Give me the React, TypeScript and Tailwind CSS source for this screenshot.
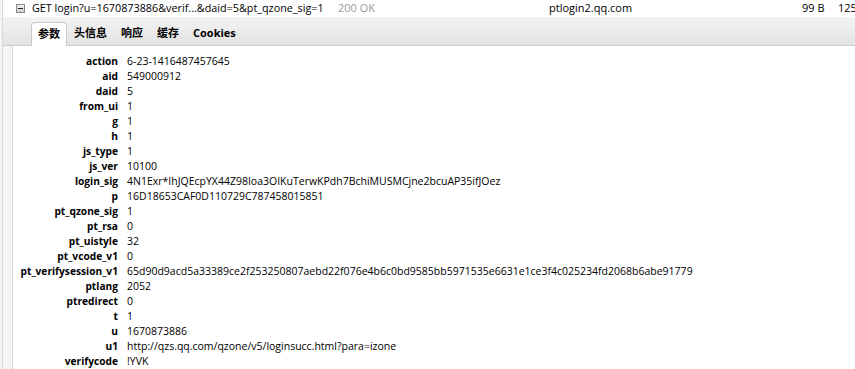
import React from 'react';

const params: [string, string][] = [
  ['action', '6-23-1416487457645'],
  ['aid', '549000912'],
  ['daid', '5'],
  ['from_ui', '1'],
  ['g', '1'],
  ['h', '1'],
  ['js_type', '1'],
  ['js_ver', '10100'],
  ['login_sig', '4N1Exr*IhJQEcpYX44Z98Ioa3OIKuTerwKPdh7BchiMUSMCjne2bcuAP35ifJOez'],
  ['p', '16D18653CAF0D110729C787458015851'],
  ['pt_qzone_sig', '1'],
  ['pt_rsa', '0'],
  ['pt_uistyle', '32'],
  ['pt_vcode_v1', '0'],
  ['pt_verifysession_v1', '65d90d9acd5a33389ce2f253250807aebd22f076e4b6c0bd9585bb5971535e6631e1ce3f4c025234fd2068b6abe91779'],
  ['ptlang', '2052'],
  ['ptredirect', '0'],
  ['t', '1'],
  ['u', '1670873886'],
  ['u1', 'http://qzs.qq.com/qzone/v5/loginsucc.html?para=izone'],
  ['verifycode', '!YVK'],
];

const tabs = ['参数', '头信息', '响应', '缓存', 'Cookies'];

const App: React.FC = () => {
  return (
    <div
      className="w-[855px] h-[369px] bg-white overflow-hidden flex text-black"
      style={{ fontFamily: '"Open Sans", "Noto Sans CJK SC", sans-serif' }}
    >
      {/* left gutter line */}
      <div className="w-[3px] shrink-0 border-r border-[#d9d9d9] bg-[#f4f4f4]" />

      <div className="flex-1 flex flex-col min-w-0">
        {/* request row */}
        <div className="h-[17px] flex items-center text-[11px] whitespace-nowrap">
          <div className="ml-[13px] w-[9px] h-[9px] shrink-0 border border-[#8a8a8a] bg-gradient-to-b from-[#f4f4f4] to-[#cfcfcf] flex items-center justify-center">
            <div className="w-[5px] h-px bg-[#222]" />
          </div>
          <div className="ml-[7px] w-[290px] shrink-0 overflow-hidden font-medium text-[10.8px]">
            GET login?u=1670873886&amp;verif...&amp;daid=5&amp;pt_qzone_sig=18
          </div>
          <div className="ml-[16px] w-[211px] shrink-0 text-[#9a9a9a]">200 OK</div>
          <div className="w-[253px] shrink-0">ptlogin2.qq.com</div>
          <div className="w-[36px] shrink-0">99 B</div>
          <div>125</div>
        </div>

        {/* tab bar */}
        <div className="h-[29px] flex items-end bg-gradient-to-b from-[#f3f3f3] to-[#e3e3e3] border-b border-[#cfcfcf] pl-[28px] text-[11px] font-bold">
          {tabs.map((t, i) => (
            <div
              key={t}
              className={
                i === 0
                  ? 'h-[24px] px-[6px] flex items-center bg-white border border-b-0 border-[#c8c8c8] rounded-t-[4px] -mb-px'
                  : 'h-[24px] px-[6px] flex items-center border border-transparent'
              }
            >
              {t}
            </div>
          ))}
        </div>

        {/* params panel */}
        <div className="flex-1 flex">
          <div className="w-[10px] shrink-0 bg-[#f4f4f4] border-r border-[#d6d6d6]" />
          <div className="flex-1 pt-[8px] text-[10.5px] leading-[15px] whitespace-nowrap">
            {params.map(([k, v]) => (
              <div key={k} className="flex">
                <div className="w-[105px] text-right font-bold text-[10.2px]">{k}</div>
                <div className="ml-[9px]">{v}</div>
              </div>
            ))}
          </div>
        </div>
      </div>
    </div>
  );
};

export default App;
